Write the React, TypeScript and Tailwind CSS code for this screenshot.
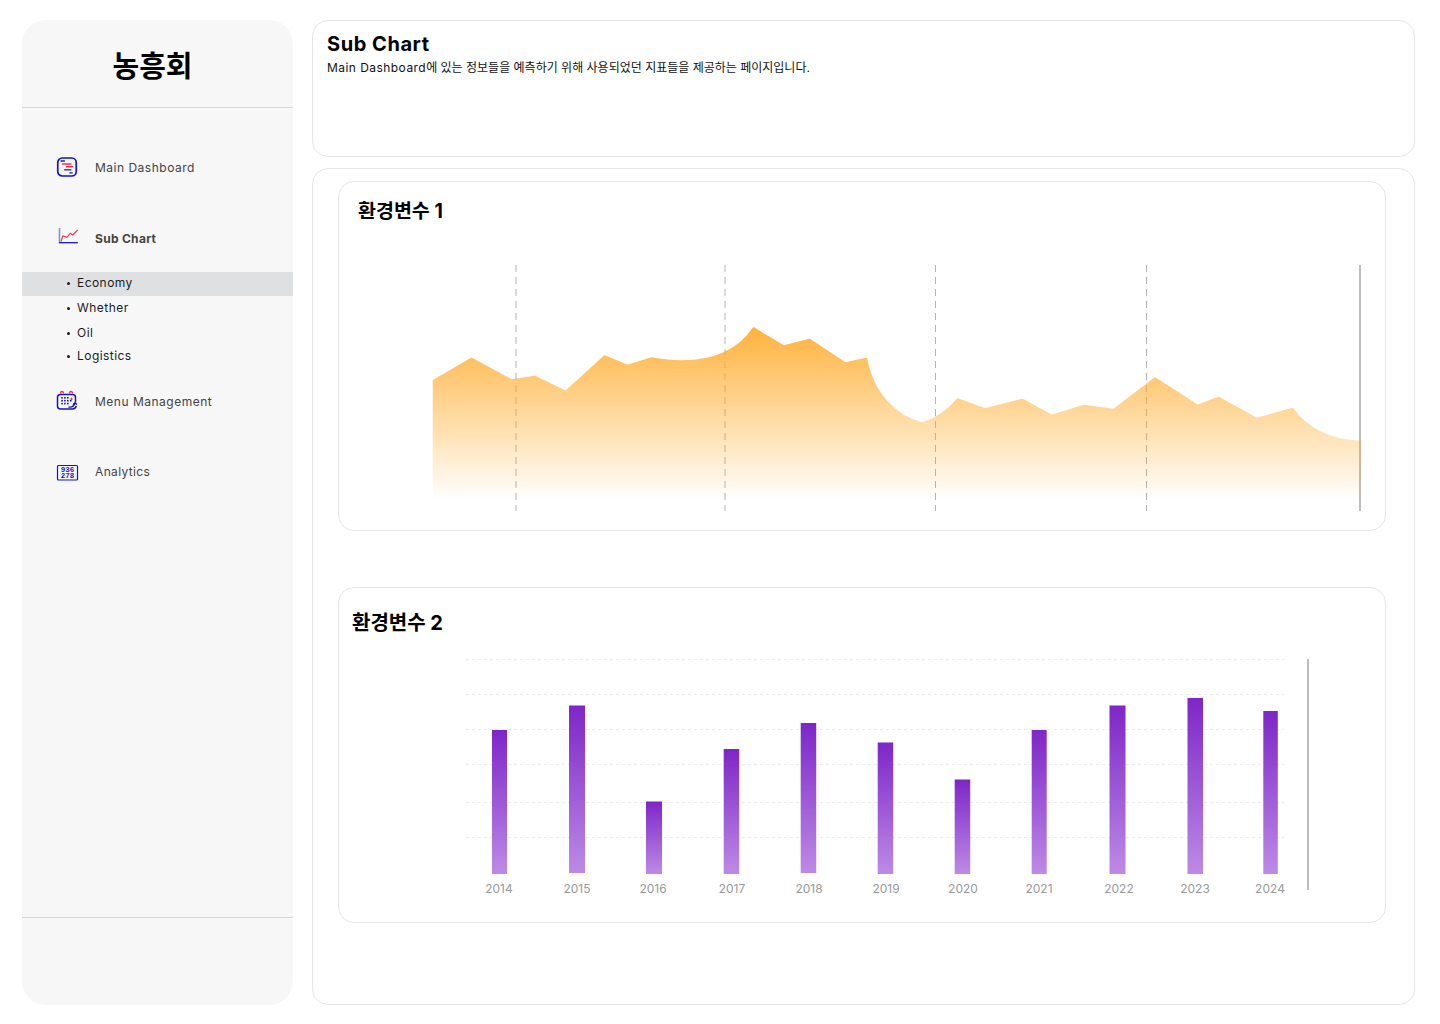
const areaPath =
  "M433.5 380.5 L471.5 358.5 L511.5 380 L535 376.5 L565.5 391.5 L604.5 356 L627.5 365.5 L651.5 358 C 665 360.5 672 361 682 361 C 712 361 738 351 753.5 328 L783.5 346 L809.5 339.5 L845 363 L866.5 358.5 C 873 395 898 418 922.5 423 C 935 419 947 412 957.5 399 L985 409 L1022.5 399.5 L1051.5 415.5 L1084 405.5 L1113.5 409.5 L1155 378 L1197.5 405.5 L1218.5 397.5 L1256.5 418.5 L1292.5 408.5 C 1306 428 1330 440.5 1360.5 441.5 L1360.5 500 L433.5 500 Z";

const dashedLines = [516, 725, 935.5, 1146.5];
const gridLines = [659.5, 694.5, 729.5, 764.5, 802.5, 837.5];

const bars = [
  { year: "2014", x: 492, w: 15, top: 730, bottom: 874, label: 499 },
  { year: "2015", x: 569, w: 16, top: 705.5, bottom: 873, label: 577 },
  { year: "2016", x: 646, w: 16, top: 801.5, bottom: 874, label: 653 },
  { year: "2017", x: 723.7, w: 15.5, top: 749, bottom: 874, label: 732 },
  { year: "2018", x: 800.7, w: 15.5, top: 723, bottom: 873, label: 809 },
  { year: "2019", x: 877.7, w: 15.5, top: 742.5, bottom: 874, label: 886 },
  { year: "2020", x: 954.7, w: 15.5, top: 779.5, bottom: 874, label: 963 },
  { year: "2021", x: 1031.7, w: 15, top: 730, bottom: 874, label: 1039 },
  { year: "2022", x: 1109.5, w: 16, top: 705.5, bottom: 874, label: 1119 },
  { year: "2023", x: 1187.5, w: 15.5, top: 698, bottom: 874, label: 1195 },
  { year: "2024", x: 1263.3, w: 14.5, top: 711, bottom: 874, label: 1270 },
];

const subItems = ["Economy", "Whether", "Oil", "Logistics"];

function DashboardIcon() {
  return (
    <svg viewBox="0 0 24 24" className="h-6 w-6 shrink-0" fill="none" strokeLinecap="round">
      <rect x="1.75" y="3" width="18.5" height="18" rx="4.5" stroke="#1414c0" strokeWidth="1.7" />
      <path d="M5 6h3.5" stroke="#23238c" strokeWidth="1.3" />
      <path d="M6.5 9h8.5M10.5 11.8h6" stroke="#f5304f" strokeWidth="1.4" />
      <path d="M8.5 14.8h6.5M13.8 17.8h2.5" stroke="#23238c" strokeWidth="1.3" />
    </svg>
  );
}

function ChartIcon() {
  return (
    <svg viewBox="0 0 24 24" className="h-6 w-6 shrink-0" fill="none">
      <path d="M3.5 2v15" stroke="#8c8cdc" strokeWidth="1.6" />
      <path d="M3 16.7h18.8" stroke="#1414c0" strokeWidth="1.3" />
      <path d="M5 15.7 6.7 10l4.3 1.3L14.3 7.3l2.4 1.7L21.7 4" stroke="#f5304f" strokeWidth="1.1" />
    </svg>
  );
}

function CalendarIcon() {
  const dots = [];
  for (let row = 0; row < 3; row++) {
    for (let col = 0; col < 4; col++) {
      if (row === 0 && col === 3) continue;
      if (row === 2 && col === 3) continue;
      dots.push(<rect key={`${row}-${col}`} x={5.2 + col * 2.9} y={8 + row * 2.9} width="1.6" height="1.6" fill="#1414c0" />);
    }
  }
  return (
    <svg viewBox="0 0 24 24" className="h-6 w-6 shrink-0" fill="none">
      <path d="M19.5 13V8.5a3 3 0 0 0-3-3h-12a3 3 0 0 0-3 3V17a3 3 0 0 0 3 3h12c1.6 0 3.2-1.2 3.8-3" stroke="#1414c0" strokeWidth="1.5" />
      <path d="M4.5 4.5c0-2.6 3-2.6 3 0M13.5 4.5c0-2.6 3-2.6 3 0" stroke="#f5304f" strokeWidth="1.4" />
      {dots}
      <path d="M14.2 10h2.6M15.5 8.7v2.6" stroke="#f5304f" strokeWidth="1" />
      <path d="M12.5 18c3 .5 5.5-.8 6.5-4M17 15.5l2-1.8 1.9 1.9" stroke="#1414c0" strokeWidth="1.4" />
    </svg>
  );
}

function NumbersIcon() {
  return (
    <svg viewBox="0 0 24 24" className="h-6 w-6 shrink-0" fill="none">
      <rect x="1.5" y="5.5" width="20" height="14.5" rx="1" stroke="#1414c0" strokeWidth="1.2" />
      <text x="11.5" y="12" textAnchor="middle" fontFamily="'Liberation Mono', monospace" fontWeight="700" fontSize="7.5" fill="#1414c0">936</text>
      <text x="11.5" y="18.4" textAnchor="middle" fontFamily="'Liberation Mono', monospace" fontWeight="700" fontSize="7.5" fill="#1414c0">278</text>
    </svg>
  );
}

function Sidebar() {
  return (
    <aside className="flex w-[271px] shrink-0 flex-col rounded-[24px] bg-[#f7f7f7]">
      <div className="flex h-[88px] items-center justify-center border-b border-[#d6d6d6] pt-[6px] pr-[10px]">
        <span className="text-[29px] leading-none font-bold text-black">농흥회</span>
      </div>

      <nav className="flex flex-1 flex-col pt-[47px] text-[12px] text-[#444444]">
        <div className="flex h-6 items-center gap-[15px] pl-[34px]">
          <DashboardIcon />
          <span className="pt-[2px] tracking-[0.5px]">Main Dashboard</span>
        </div>
        <div className="mt-[47px] flex h-6 items-center gap-[15px] pl-[34px]">
          <ChartIcon />
          <span className="pt-[2px] font-bold tracking-[0.3px]">Sub Chart</span>
        </div>
        <ul className="mt-[22px] flex flex-col text-[#1c1c1c]">
          {subItems.map((item, i) => (
            <li
              key={item}
              className={`flex items-center gap-[7px] pl-[45px] ${i === 0 ? "h-6 bg-[#dfe0e2] pb-[2px]" : i === 1 ? "h-6" : i === 2 ? "mt-px h-6" : "-mt-px h-6"}`}
            >
              <span className="h-[3px] w-[3px] rounded-full bg-[#1c1c1c]" />
              <span className="tracking-[0.45px]">{item}</span>
            </li>
          ))}
        </ul>
        <div className="mt-[21px] flex h-6 items-center gap-[15px] pl-[34px]">
          <CalendarIcon />
          <span className="pt-[2px] tracking-[0.5px]">Menu Management</span>
        </div>
        <div className="mt-[47px] flex h-6 items-center gap-[15px] pl-[34px]">
          <NumbersIcon />
          <span className="tracking-[0.35px]">Analytics</span>
        </div>
      </nav>

      <div className="h-[88px] border-t border-[#d6d6d6]" />
    </aside>
  );
}

function AreaChart() {
  return (
    <svg viewBox="339 255 1046 265" className="mt-[30px] block h-[265px] w-[1046px]" fill="none">
      <defs>
        <linearGradient id="areaFill" gradientUnits="userSpaceOnUse" x1="0" y1="327" x2="0" y2="500">
          <stop offset="0" stopColor="#ffab2b" stopOpacity="0.92" />
          <stop offset="1" stopColor="#ffab2b" stopOpacity="0" />
        </linearGradient>
        {/* stroke in the mask rounds the peaks without doubling the alpha */}
        <mask id="areaMask" maskUnits="userSpaceOnUse" x="339" y="255" width="1046" height="265">
          <path d={areaPath} fill="white" stroke="white" strokeWidth="1.5" strokeLinejoin="round" />
        </mask>
      </defs>
      {dashedLines.map((x) => (
        <line key={x} x1={x} x2={x} y1="265" y2="511" stroke="#b4b4b4" strokeDasharray="7 5" />
      ))}
      <line x1="1360" x2="1360" y1="265" y2="511" stroke="#bdbdbd" strokeWidth="2" />
      <rect x="339" y="255" width="1046" height="265" fill="url(#areaFill)" mask="url(#areaMask)" />
    </svg>
  );
}

function BarChart() {
  return (
    <svg viewBox="339 651 1046 250" className="mt-[14px] block h-[250px] w-[1046px]" fill="none">
      <defs>
        <linearGradient id="barFill" x1="0" y1="0" x2="0" y2="1">
          <stop offset="0" stopColor="#7e26c8" />
          <stop offset="1" stopColor="#bd8ae6" />
        </linearGradient>
      </defs>
      {gridLines.map((y) => (
        <line key={y} x1="466" x2="1284" y1={y} y2={y} stroke="#e9ebef" strokeDasharray="3 3" />
      ))}
      <line x1="1308" x2="1308" y1="659" y2="890" stroke="#bdbdbd" strokeWidth="2" />
      {bars.map((b) => (
        <g key={b.year}>
          <rect x={b.x} y={b.top} width={b.w} height={b.bottom - b.top} fill="url(#barFill)" />
          <text x={b.label} y="893" textAnchor="middle" fontSize="12" fill="#999999">
            {b.year}
          </text>
        </g>
      ))}
    </svg>
  );
}

export default function App() {
  return (
    <div className="flex h-screen gap-[19px] bg-white pt-[20px] pr-[25px] pb-[19px] pl-[22px] font-['Inter','Noto_Sans_CJK_KR',sans-serif]">
      <Sidebar />
      <main className="flex min-w-0 flex-1 flex-col gap-[11px]">
        <section className="h-[137px] rounded-2xl border border-[#e6e6e6] pt-[10px] pl-[14px]">
          <h1 className="text-[20px] leading-[26px] font-bold tracking-[0.55px] text-black">Sub Chart</h1>
          <p className="mt-[2px] text-[12px] leading-[18px] text-[#111111]">
            <span className="tracking-[0.45px]">Main Dashboard</span>에 있는 정보들을 예측하기 위해 사용되었던 지표들을 제공하는 페이지입니다.
          </p>
        </section>
        <section className="flex-1 rounded-2xl border border-[#e6e6e6] pt-[12px] pr-[28px] pl-[25px]">
          <div className="h-[350px] rounded-2xl border border-[#e6e6e6] pt-[15px]">
            <h2 className="pl-[19px] text-[19.5px] leading-[28px] font-bold text-black">환경변수 1</h2>
            <AreaChart />
          </div>
          <div className="mt-[56px] h-[336px] rounded-2xl border border-[#e6e6e6] pt-[21px]">
            <h2 className="pl-[13px] text-[20px] leading-[28px] font-bold text-black">환경변수 2</h2>
            <BarChart />
          </div>
        </section>
      </main>
    </div>
  );
}
